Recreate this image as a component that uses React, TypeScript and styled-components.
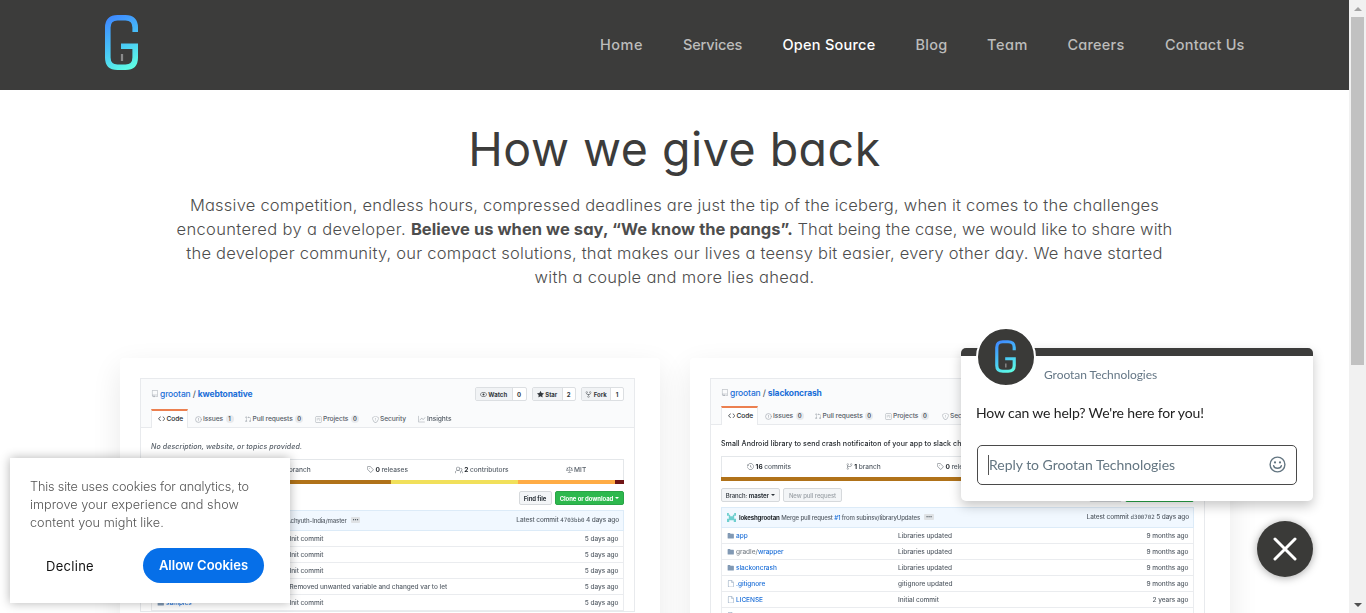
import React from 'react';
import styled, { createGlobalStyle } from 'styled-components';
import {
  GoCode, GoEye, GoFile, GoFileDirectoryFill, GoGitBranch, GoGitPullRequest, GoGraph, GoHistory,
  GoLaw, GoPeople, GoProject, GoRepo, GoRepoForked, GoShield, GoStarFill, GoTag,
} from 'react-icons/go';
import { CircleAlert } from 'lucide-react';

const GlobalStyle = createGlobalStyle`
  *, *::before, *::after { box-sizing: border-box; }
  html, body { margin: 0; height: 613px; overflow: hidden; background: #fff; }
  body { font-family: Inter, 'Open Sans', sans-serif; font-feature-settings: 'cv11'; }
`;

const Page = styled.div`
  display: flex;
  width: 1366px;
  height: 613px;
  overflow: hidden;
`;

const Content = styled.div`
  width: 1349px;
  height: 613px;
  overflow: hidden;
`;

/* ---------- header ---------- */

const Header = styled.header`
  display: flex;
  align-items: center;
  justify-content: space-between;
  height: 90px;
  padding: 0 104px 0 105px;
  background: #3c3c3b;
`;

const LogoLink = styled.a`
  display: flex;
  padding-bottom: 5px;
`;

const Nav = styled.nav`
  display: flex;
  gap: 40px;
`;

const NavLink = styled.a<{ $active?: boolean; $w: number; $ls: number }>`
  width: ${p => p.$w}px;
  white-space: nowrap;
  font-size: 14.5px;
  font-weight: 500;
  line-height: 24px;
  letter-spacing: ${p => p.$ls}px;
  color: ${p => (p.$active ? '#fff' : '#bcbcbb')};
`;

const navItems = [
  { label: 'Home', w: 43, ls: 0.5 },
  { label: 'Services', w: 59.5, ls: -0.15 },
  { label: 'Open Source', w: 93, ls: 0.25, active: true },
  { label: 'Blog', w: 31.5, ls: 0.27 },
  { label: 'Team', w: 40.5, ls: 0.57 },
  { label: 'Careers', w: 57.5, ls: 0.23 },
  { label: 'Contact Us', w: 80, ls: 0.2 },
];

function Logo({ width, height, id, stroke = 5.6 }: { width: number; height: number; id: string; stroke?: number }) {
  return (
    <svg width={width} height={height} viewBox="0 0 33 55" fill="none" preserveAspectRatio="none">
      <defs>
        <linearGradient id={id} x1="4" y1="4" x2="30" y2="52" gradientUnits="userSpaceOnUse">
          <stop offset="0" stopColor="#3f8cff" />
          <stop offset="0.5" stopColor="#48c4f6" />
          <stop offset="1" stopColor="#5fffe4" />
        </linearGradient>
      </defs>
      <path
        d="M30.2 17V12.5Q30.2 2.8 20.5 2.8H12.5Q2.8 2.8 2.8 12.5V42.5Q2.8 52.2 12.5 52.2H20.5Q30.2 52.2 30.2 42.5V31.2H16"
        stroke={`url(#${id})`}
        strokeWidth={stroke}
      />
      <path d="M17 39V46" stroke="#8b8b8b" strokeWidth="2.2" />
    </svg>
  );
}

/* ---------- intro ---------- */

const Intro = styled.section`
  padding-top: 31px;
  text-align: center;
`;

const Title = styled.h1`
  margin: 0 0 16px;
  font-size: 46.5px;
  font-weight: 390;
  line-height: 56px;
  letter-spacing: 0.5px;
  color: #3c3c3b;
`;

const Lead = styled.p`
  margin: 0 0 69px;
  font-size: 16.5px;
  font-weight: 300;
  line-height: 24px;
  color: #4d4d4d;
`;

const Line = styled.span<{ $ls: number }>`
  display: block;
  white-space: nowrap;
  letter-spacing: ${p => p.$ls}px;
`;

const Run = styled.span<{ $ls: number }>`
  letter-spacing: ${p => p.$ls}px;
`;

const Strong = styled.strong`
  font-weight: 700;
  letter-spacing: 0.06px;
`;

/* ---------- repository cards ---------- */

const Cards = styled.section`
  display: flex;
  gap: 30px;
  padding-left: 120px;
`;

const Card = styled.article`
  width: 540px;
  height: 400px;
  padding: 20px;
  border-radius: 4px;
  background: #fff;
  box-shadow: 0 10px 30px rgba(0, 0, 0, 0.09);
`;

const Shot = styled.div`
  width: 495px;
  border: 1px solid #e8eaed;
  font-feature-settings: normal;
  font-weight: 500;
  color: #586069;
  font-size: 6.5px;
  filter: blur(0.3px);
`;

const RepoHead = styled.div<{ $h: number }>`
  display: flex;
  flex-direction: column;
  justify-content: space-between;
  height: ${p => p.$h}px;
  padding: 0 10px;
  background: #fafbfc;
  border-bottom: 1px solid #e8eaed;
`;

const TitleRow = styled.div<{ $h: number }>`
  display: flex;
  align-items: center;
  justify-content: space-between;
  height: ${p => p.$h}px;
`;

const RepoName = styled.div`
  display: flex;
  align-items: center;
  font-size: 8.5px;
  letter-spacing: -0.14px;
  color: #1c6fd8;
  white-space: pre;

  svg { margin-right: 1.5px; color: #a3a9b0; }
  b { font-weight: 650; }
  i { font-style: normal; color: #586069; }
`;

const Social = styled.div`
  display: flex;
  gap: 5px;
`;

const SocialButton = styled.div<{ $w: number; $split: number }>`
  display: grid;
  grid-template-columns: ${p => p.$split}px 1fr;
  width: ${p => p.$w}px;
  height: 13.5px;
  border: 1px solid #dcdfe2;
  border-radius: 2px;
  background: #fff;
  font-size: 6px;
  font-weight: 650;
  color: #33383d;

  span {
    display: flex;
    align-items: center;
    justify-content: center;
    gap: 1.5px;
  }
  span:first-child {
    border-right: 1px solid #dcdfe2;
    background: #f1f3f5;
  }
`;

const Tabs = styled.div`
  display: flex;
  height: 19px;
  margin-bottom: -1px;
`;

const Tab = styled.div<{ $w: number; $active?: boolean }>`
  display: flex;
  align-items: center;
  gap: 1.5px;
  width: ${p => p.$w}px;
  padding: 0 0 1px 5.5px;
  font-size: 6.7px;
  letter-spacing: -0.09px;
  white-space: nowrap;
  color: ${p => (p.$active ? '#24292e' : '#586069')};
  border: 1px solid ${p => (p.$active ? '#e8eaed' : 'transparent')};
  border-top: 2px solid ${p => (p.$active ? '#ec8050' : 'transparent')};
  border-bottom: 0;
  background: ${p => (p.$active ? '#fff' : 'transparent')};

  svg { flex: none; color: ${p => (p.$active ? '#24292e' : '#9aa1a8')}; }
`;

const Badge = styled.span`
  min-width: 8px;
  margin-left: 1px;
  border-radius: 4px;
  background: #e8eaed;
  font-size: 5.8px;
  font-weight: 600;
  line-height: 7.5px;
  text-align: center;
  color: #444d56;
`;

const RepoBody = styled.div`
  padding: 0 10px;
`;

const Description = styled.div<{ $italic?: boolean }>`
  display: flex;
  align-items: center;
  height: 31px;
  padding-top: 5px;
  font-size: 7.1px;
  letter-spacing: ${p => (p.$italic ? 0.08 : 0.04)}px;
  white-space: nowrap;
  font-style: ${p => (p.$italic ? 'italic' : 'normal')};
  color: ${p => (p.$italic ? '#586069' : '#24292e')};
`;

const Summary = styled.div`
  display: grid;
  grid-template-columns: repeat(5, 1fr);
  height: 20.5px;
  border: 1px solid #e4e7ea;
  border-bottom: 0;
  font-size: 6.6px;

  span {
    display: flex;
    align-items: center;
    justify-content: center;
    gap: 1.5px;
  }
  b { font-weight: 650; color: #24292e; }
`;

const Languages = styled.div`
  display: flex;
  height: 4px;
`;

const Language = styled.div<{ $c: string; $n: number }>`
  flex: ${p => p.$n};
  background: ${p => p.$c};
`;

const Actions = styled.div`
  display: flex;
  align-items: center;
  height: 26px;
  padding-top: 3px;
  gap: 3.5px;
`;

const Button = styled.div<{ $w: number; $green?: boolean; $muted?: boolean }>`
  display: flex;
  align-items: center;
  justify-content: center;
  width: ${p => p.$w}px;
  height: 13.5px;
  border: 1px solid ${p => (p.$green ? '#2aa447' : '#d6d9dc')};
  border-radius: 2px;
  background: ${p => (p.$green ? '#2db84d' : '#f3f5f7')};
  font-size: 6px;
  font-weight: ${p => (p.$muted ? 500 : 650)};
  letter-spacing: -0.07px;
  white-space: pre;
  color: ${p => (p.$green ? '#fff' : p.$muted ? '#9aa0a6' : '#2f363d')};

  i { font-style: normal; font-weight: 500; }
`;

const Spacer = styled.div`
  flex: 1;
`;

const Caret = styled.span`
  width: 0;
  height: 0;
  margin-left: 2px;
  border: 2px solid transparent;
  border-top: 2px solid currentColor;
  border-bottom: 0;
`;

const Tease = styled.div`
  display: flex;
  align-items: center;
  height: 21.5px;
  padding: 0 4px 0 5px;
  border: 1px solid #dcebf8;
  background: #f1f8ff;
  font-size: 6.1px;
  letter-spacing: -0.17px;
  white-space: pre;

  b { font-weight: 650; color: #24292e; }
  em { font-style: normal; color: #1c6fd8; }
`;

const Identicon = styled.span`
  display: flex;
  margin-right: 3px;
`;

const Ellipsis = styled.span`
  margin-left: 4px;
  padding: 0 2px;
  border-radius: 1px;
  background: #dfe2e5;
  font-size: 4px;
  line-height: 6px;
  color: #444d56;
`;

const Commit = styled.span`
  margin-left: auto;
  font-size: 6.5px;
  letter-spacing: -0.12px;

  code {
    font-family: 'DejaVu Sans Mono', monospace;
    font-size: 5.8px;
    letter-spacing: -0.05px;
    color: #444d56;
  }
`;

const FileRow = styled.div<{ $offset: number }>`
  display: grid;
  grid-template-columns: ${p => p.$offset}px 1fr auto;
  align-items: center;
  height: 16px;
  padding: 0 4.5px 0 4.5px;
  border: 1px solid #eaecef;
  border-top: 0;
  white-space: nowrap;
  letter-spacing: -0.03px;

  em { font-style: normal; color: #1c6fd8; }
`;

const FileName = styled.span`
  display: flex;
  align-items: center;
  gap: 2px;
  color: #7b838b;

  svg { flex: none; color: #8199b4; }
`;

interface FileItem { dir?: boolean; prefix?: string; name: string; message: string; age: string }

interface RepoProps {
  name: string;
  titleHeight: number;
  counts: [string, string, string];
  description: string;
  italic?: boolean;
  contributors: string;
  commits: string;
  languages: [string, number][];
  leftActions?: boolean;
  tease: React.ReactNode;
  hash: string;
  commitAge: string;
  offset: number;
  files: FileItem[];
}

function Repo(p: RepoProps) {
  return (
    <Card>
      <Shot>
        <RepoHead $h={p.titleHeight + 19}>
          <TitleRow $h={p.titleHeight}>
            <RepoName>
              <GoRepo size={7.5} />grootan<i> / </i><b>{p.name}</b>
            </RepoName>
            <Social>
              <SocialButton $w={52} $split={37}><span><GoEye size={7} />Watch</span><span>0</span></SocialButton>
              <SocialButton $w={44.5} $split={30}><span><GoStarFill size={7} />Star</span><span>2</span></SocialButton>
              <SocialButton $w={43} $split={29}><span><GoRepoForked size={7} />Fork</span><span>1</span></SocialButton>
            </Social>
          </TitleRow>
          <Tabs>
            <Tab $w={37} $active><GoCode size={7.5} />Code</Tab>
            <Tab $w={50}><CircleAlert size={7} />Issues<Badge>{p.counts[0]}</Badge></Tab>
            <Tab $w={70}><GoGitPullRequest size={6.5} />Pull requests<Badge>{p.counts[1]}</Badge></Tab>
            <Tab $w={57}><GoProject size={7} />Projects<Badge>{p.counts[2]}</Badge></Tab>
            <Tab $w={46}><GoShield size={7} />Security</Tab>
            <Tab $w={50}><GoGraph size={8} />Insights</Tab>
          </Tabs>
        </RepoHead>
        <RepoBody>
          <Description $italic={p.italic}>{p.description}</Description>
          <Summary>
            <span><GoHistory size={7} /><b>{p.commits}</b> commits</span>
            <span><GoGitBranch size={7} /><b>1</b> branch</span>
            <span><GoTag size={7} /><b>0</b> releases</span>
            <span><GoPeople size={8} /><b>{p.contributors}</b> contributors</span>
            <span><GoLaw size={7} />MIT</span>
          </Summary>
          <Languages>{p.languages.map(([c, n]) => <Language key={c} $c={c} $n={n} />)}</Languages>
          <Actions>
            {p.leftActions && (
              <>
                <Button $w={58.5}><i>Branch: </i>master<Caret /></Button>
                <Button $w={59} $muted>New pull request</Button>
              </>
            )}
            <Spacer />
            <Button $w={33}>Find file</Button>
            <Button $w={69} $green>Clone or download<Caret /></Button>
          </Actions>
          <Tease>
            <Avatar />
            {p.tease}
            <Ellipsis>•••</Ellipsis>
            <Commit>Latest commit <code>{p.hash}</code> {p.commitAge}</Commit>
          </Tease>
          {p.files.map(f => (
            <FileRow key={f.name} $offset={p.offset}>
              <FileName>
                {f.dir ? <GoFileDirectoryFill size={7.5} /> : <GoFile size={7.5} />}
                <span>{f.prefix}<em>{f.name}</em></span>
              </FileName>
              <span>{f.message}</span>
              <span>{f.age}</span>
            </FileRow>
          ))}
        </RepoBody>
      </Shot>
    </Card>
  );
}

function Avatar() {
  return (
    <Identicon>
      <svg width="9" height="9" viewBox="0 0 10 10" fill="#6fcfcf">
        <path d="M0 0h2v2h1.500v1.500h3V2H8V0h2v3H8v3.500h2V10H7.500V8h-5v2H0V6.500h2V3H0z" />
      </svg>
    </Identicon>
  );
}

/* ---------- cookie notice ---------- */

const Cookie = styled.aside`
  position: fixed;
  left: 10px;
  top: 458px;
  width: 280px;
  height: 145px;
  padding: 20px;
  background: #fff;
  box-shadow: 0 0 10px rgba(0, 0, 0, 0.3);
`;

const CookieText = styled.p`
  margin: 0 0 16px;
  font-size: 12.7px;
  font-weight: 300;
  line-height: 18px;
  color: #555;
`;

const CookieActions = styled.div`
  display: flex;
  align-items: center;
  padding-left: 16px;
  gap: 49px;
  font-size: 13px;
`;

const Decline = styled.span`
  width: 48px;
  letter-spacing: 0.29px;
  color: #111;
`;

const Allow = styled.span`
  width: 121px;
  height: 35px;
  border-radius: 18px;
  background: #066fe8;
  font-weight: 600;
  line-height: 35px;
  text-align: center;
  color: #fff;
`;

/* ---------- chat ---------- */

const Chat = styled.aside`
  position: fixed;
  left: 961px;
  top: 348px;
  width: 352px;
  height: 153px;
  padding: 0 16px;
  border-top: 8px solid #3c3c3b;
  border-radius: 5px;
  background: #fff;
  box-shadow: 0 5px 12px rgba(0, 0, 0, 0.22);
  font-family: Lato, sans-serif;
  font-feature-settings: normal;
`;

const ChatAvatar = styled.div`
  position: absolute;
  left: 15px;
  top: -29px;
  display: flex;
  align-items: center;
  justify-content: center;
  width: 60px;
  height: 60px;
  padding: 0 1px 2px 0;
  border: 2px solid #fff;
  border-radius: 50%;
  background: #3a3a38;
`;

const ChatName = styled.div`
  padding: 11px 0 0 67px;
  font-size: 12px;
  line-height: 16px;
  letter-spacing: -0.05px;
  color: #657786;
`;

const ChatMessage = styled.div`
  margin-left: -1px;
  padding-top: 20px;
  font-size: 14px;
  line-height: 20px;
  letter-spacing: -0.13px;
  color: #222;
`;

const ChatInput = styled.div`
  display: flex;
  align-items: center;
  justify-content: space-between;
  height: 40px;
  margin-top: 22px;
  padding: 0 10.5px 1px 10px;
  border: 1px solid #4a4a4a;
  border-radius: 5px;
  font-size: 14px;
  color: #647682;
`;

const Placeholder = styled.span`
  border-left: 1px solid #555;
  line-height: 20px;
  letter-spacing: -0.03px;
`;

const CloseButton = styled.button`
  position: fixed;
  left: 1257px;
  top: 521px;
  display: flex;
  align-items: center;
  justify-content: center;
  width: 56px;
  height: 56px;
  padding: 0;
  border: 0;
  border-radius: 50%;
  background: #3a3a38;
  box-shadow: 0 1px 8px rgba(0, 0, 0, 0.35);
`;

/* ---------- scrollbar ---------- */

const Scrollbar = styled.div`
  display: flex;
  flex-direction: column;
  justify-content: space-between;
  align-items: center;
  width: 17px;
  height: 613px;
  padding: 7px 0 6px;
  background: #f1f1f1;
`;

const Thumb = styled.div`
  width: 13px;
  height: 348px;
  margin: 6px 0 auto;
  background: #c1c1c1;
`;

const Arrow = styled.svg`
  display: block;
`;

export default function App() {
  return (
    <Page>
      <GlobalStyle />
      <Content>
        <Header>
          <LogoLink><Logo id="logo-main" width={33} height={55} /></LogoLink>
          <Nav>
            {navItems.map(n => (
              <NavLink key={n.label} $w={n.w} $ls={n.ls} $active={n.active}>{n.label}</NavLink>
            ))}
          </Nav>
        </Header>
        <Intro>
          <Title>How we give back</Title>
          <Lead>
            <Line $ls={0.22}>Massive competition, endless hours, compressed deadlines are just the tip of the iceberg, when it comes to the challenges</Line>
            <Line $ls={0.09}><Run $ls={0.34}>encountered by a developer. </Run><Strong>Believe us when we say, “We know the pangs”.</Strong> That being the case, we would like to share with</Line>
            <Line $ls={0.23}>the developer community, our compact solutions, that makes our lives a teensy bit easier, every other day. We have started</Line>
            <Line $ls={0.28}>with a couple and more lies ahead.</Line>
          </Lead>
        </Intro>
        <Cards>
          <Repo
            name="kwebtonative"
            titleHeight={30}
            counts={['1', '0', '0']}
            description="No description, website, or topics provided."
            italic
            commits="7"
            contributors="2"
            languages={[['#b07219', 239.5], ['#f1e05a', 127.5], ['#ffac45', 96.5], ['#701516', 9]]}
            tease={<><b>achyuthvarma</b> Merge pull request <em>#1</em> from Achyuth-India/master</>}
            hash="4703bb0"
            commitAge="4 days ago"
            offset={133}
            files={[
              { name: 'gradle', dir: true, message: 'Init commit', age: '5 days ago' },
              { name: 'kotlin', dir: true, message: 'Init commit', age: '5 days ago' },
              { name: 'library', dir: true, message: 'Init commit', age: '5 days ago' },
              { name: 'native', dir: true, message: 'Removed unwanted variable and changed var to let', age: '5 days ago' },
              { name: 'samples', dir: true, message: 'Init commit', age: '5 days ago' },
            ]}
          />
          <Repo
            name="slackoncrash"
            titleHeight={27}
            counts={['0', '0', '0']}
            description="Small Android library to send crash notificaiton of your app to slack channel"
            commits="16"
            contributors="2"
            languages={[['#b07219', 1]]}
            leftActions
            tease={<><b>lokeshgrootan</b> Merge pull request <em>#1</em> from subinsv/libraryUpdates</>}
            hash="d300702"
            commitAge="5 days ago"
            offset={171.5}
            files={[
              { name: 'app', dir: true, message: 'Libraries updated', age: '9 months ago' },
              { prefix: 'gradle/', name: 'wrapper', dir: true, message: 'Libraries updated', age: '9 months ago' },
              { name: 'slackoncrash', dir: true, message: 'Libraries updated', age: '9 months ago' },
              { name: '.gitignore', message: 'gitignore updated', age: '9 months ago' },
              { name: 'LICENSE', message: 'Initial commit', age: '2 years ago' },
              { name: 'README.md', message: 'Update README.md', age: '9 months ago' },
            ]}
          />
        </Cards>
      </Content>
      <Scrollbar>
        <Arrow width="8" height="4" viewBox="0 0 8 4"><path d="M0 4L4 0L8 4z" fill="#a3a3a3" /></Arrow>
        <Thumb />
        <Arrow width="8" height="4" viewBox="0 0 8 4"><path d="M0 0L4 4L8 0z" fill="#505050" /></Arrow>
      </Scrollbar>

      <Cookie>
        <CookieText>
          <Line $ls={-0.15}>This site uses cookies for analytics, to</Line>
          <Line $ls={0.02}>improve your experience and show</Line>
          <Line $ls={0.03}>content you might like.</Line>
        </CookieText>
        <CookieActions>
          <Decline>Decline</Decline>
          <Allow>Allow Cookies</Allow>
        </CookieActions>
      </Cookie>

      <Chat>
        <ChatAvatar><Logo id="logo-chat" width={21} height={33} stroke={5} /></ChatAvatar>
        <ChatName>Grootan Technologies</ChatName>
        <ChatMessage>How can we help? We're here for you!</ChatMessage>
        <ChatInput>
          <Placeholder>Reply to Grootan Technologies</Placeholder>
          <svg width="17" height="17" viewBox="0 0 17 17" fill="none" stroke="#647682" strokeWidth="1.4">
            <circle cx="8.5" cy="8.5" r="7.4" />
            <path d="M4.6 9.6C5.4 13.2 11.6 13.2 12.4 9.6" strokeLinecap="round" />
            <circle cx="6" cy="6.4" r="1.1" fill="#647682" stroke="none" />
            <circle cx="11" cy="6.4" r="1.1" fill="#647682" stroke="none" />
          </svg>
        </ChatInput>
      </Chat>
      <CloseButton aria-label="Close">
        <svg width="24" height="24" viewBox="0 0 24 24" stroke="#fff" strokeWidth="3" strokeLinecap="round">
          <path d="M2 2L22 22M22 2L2 22" />
        </svg>
      </CloseButton>
    </Page>
  );
}
